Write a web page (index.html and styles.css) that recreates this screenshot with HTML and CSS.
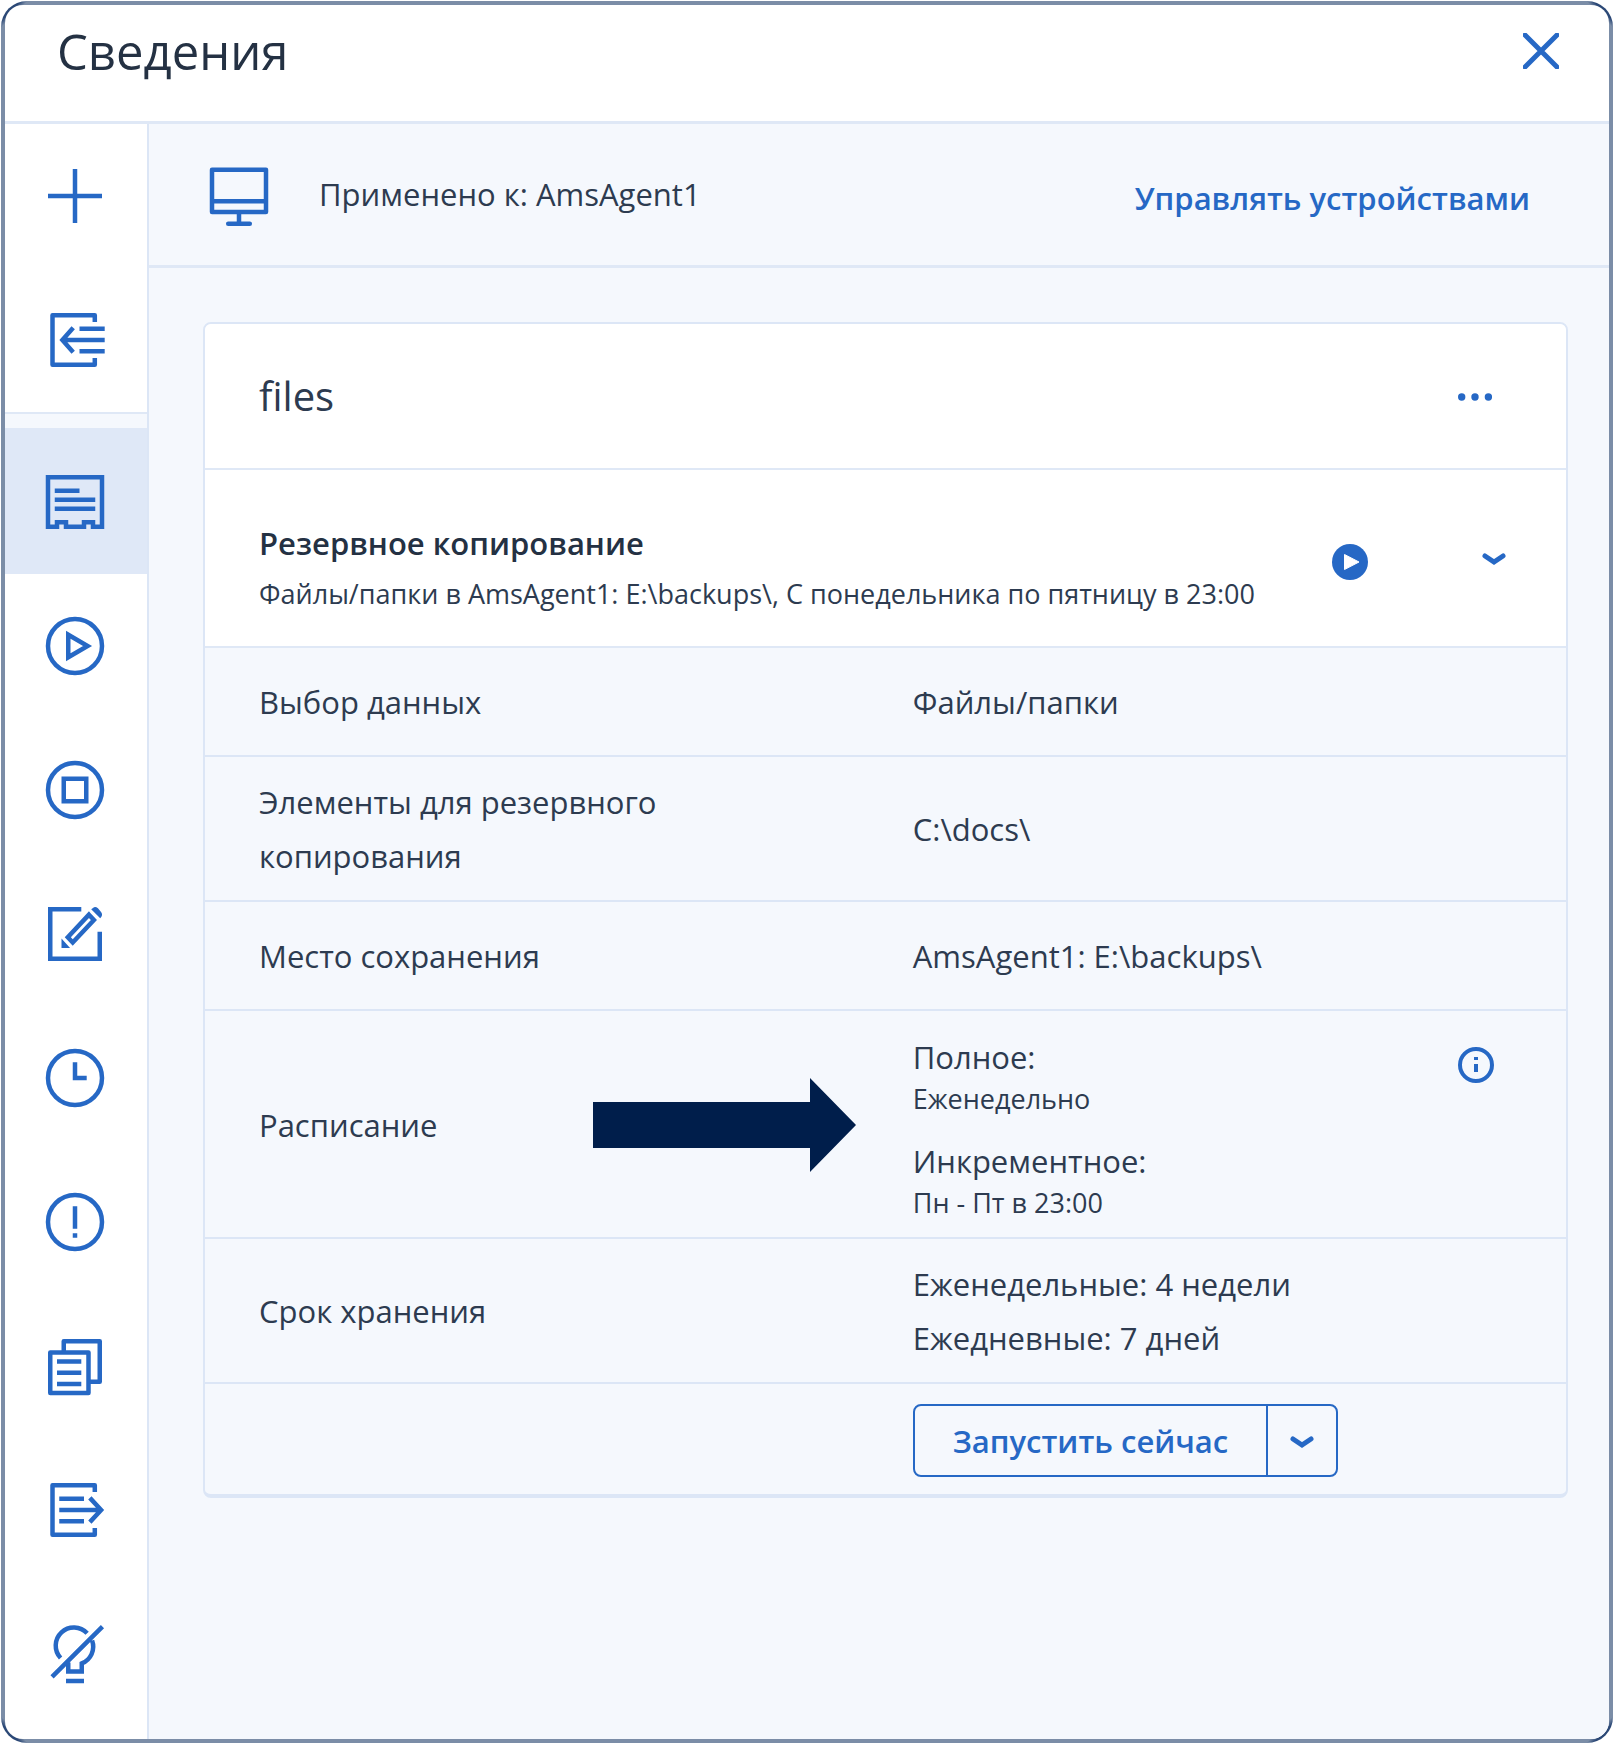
FILE: index.html
```html
<!DOCTYPE html>
<html lang="ru">
<head>
  <meta charset="UTF-8" />
  <meta name="viewport" content="width=device-width, initial-scale=1.0"/>
  <title>Сведения</title>
  <link rel="stylesheet" href="styles.css">
</head>
<body>
  <div class="frame">
    <div class="panel">
      <header class="panel-header">
        <h1>Сведения</h1>
        <button class="icon-button" aria-label="Закрыть">
          <svg class="icon-small" viewBox="0 0 36 36"><path class="thick" d="M2 2l32 32M34 2L2 34"/></svg>
        </button>
      </header>

      <div class="panel-body">
        <nav class="sidebar">
          <button class="side-item" aria-label="Создать">
            <svg class="icon" viewBox="0 0 16 16"><path d="M8 2v12M2 8h12"/></svg>
          </button>
          <button class="side-item" aria-label="Импорт">
            <svg class="icon" viewBox="0 0 16 16"><path stroke-linejoin="round" d="M12.4 4V2.5H3v11h9.4V12"/><path d="M14.6 5.5H9M14.6 8H5.4M14.6 10.5H9M7.6 5.3L5.2 8l2.4 2.7"/></svg>
          </button>
          <div class="side-gap"></div>
          <button class="side-item active" aria-label="Сведения">
            <svg class="icon" viewBox="0 0 16 16"><path d="M2 2.7h12v11h-2v-1h-2v1H6v-1H4v1H2zM3.5 5.7H9M3.5 7.7h9M3.5 9.7h9"/></svg>
          </button>
          <button class="side-item" aria-label="Запустить">
            <svg class="icon" viewBox="0 0 16 16"><circle cx="8" cy="8" r="6"/><path d="M6.5 5.5v5L10.8 8z"/></svg>
          </button>
          <button class="side-item" aria-label="Остановить">
            <svg class="icon" viewBox="0 0 16 16"><circle cx="8" cy="8" r="6"/><path d="M5.5 5.5h5v5h-5z"/></svg>
          </button>
          <button class="side-item" aria-label="Изменить">
            <svg class="icon" viewBox="0 0 16 16"><path d="M9.4 2.5H2.5v11h11v-6M11.1 3.7l1.1 1.2-4.7 5-1.1-1.2z"/><path class="solid" d="M5 9v2.1h1.9zM11.6 2.5l.4-.3q.5-.4 1.1.1l.6.7q.5.6.2 1.1l-.3.4z"/></svg>
          </button>
          <button class="side-item" aria-label="Действия">
            <svg class="icon" viewBox="0 0 16 16"><circle cx="8" cy="8" r="6"/><path d="M8 4.5V8h2.6"/></svg>
          </button>
          <button class="side-item" aria-label="Оповещения">
            <svg class="icon" viewBox="0 0 16 16"><circle cx="8" cy="8" r="6"/><path d="M8 4.5v5M8 10.5v1"/></svg>
          </button>
          <button class="side-item" aria-label="Клонировать">
            <svg class="icon" viewBox="0 0 16 16"><path stroke-linejoin="round" d="M2.5 5H11v9H2.5zM5.5 5V2.5h8v9H11"/><path d="M4 7h5.4M4 9.5h5.4M4 12h5.4"/></svg>
          </button>
          <button class="side-item" aria-label="Экспорт">
            <svg class="icon" viewBox="0 0 16 16"><path stroke-linejoin="round" d="M12.4 4V2.5H3v11h9.4V12"/><path d="M4.5 5.5H10M4.5 8h9M4.5 10.5H10M11.3 5.3L13.8 8l-2.5 2.7"/></svg>
          </button>
          <button class="side-item" aria-label="Отключить">
            <svg class="icon" viewBox="0 0 16 16"><path d="M2.9 13.1L14.1 1.9M10.7 3.4A4 4 0 0 0 4.8 8.9M11.8 5a4 4 0 0 1-2.3 5.1v1.8h-3V9.9M6 14h4"/></svg>
          </button>
        </nav>

        <main class="content">
          <div class="device-bar">
            <svg class="icon" viewBox="0 0 16 16"><path stroke-linecap="round" stroke-linejoin="round" d="M2 2.6h12v9.4H2zM2.2 9.6h11.6M8 12v2.6M5.6 14.6h4.8"/></svg>
            <span class="device-name">Применено к: AmsAgent1</span>
            <a class="manage-link" href="#">Управлять устройствами</a>
          </div>

          <section class="card">
            <div class="card-head">
              <h2>files</h2>
              <button class="icon-button" aria-label="Ещё">
                <svg class="icon-small" viewBox="0 0 36 36"><path class="solid" d="M0 19a3.7 3.7 0 1 1 7.4 0 3.7 3.7 0 0 1-7.4 0zM13.3 19a3.7 3.7 0 1 1 7.4 0 3.7 3.7 0 0 1-7.4 0zM26.7 19a3.7 3.7 0 1 1 7.4 0 3.7 3.7 0 0 1-7.4 0z"/></svg>
              </button>
            </div>

            <div class="plan">
              <div class="plan-text">
                <h3>Резервное копирование</h3>
                <p class="small">Файлы/папки в AmsAgent1: E:\backups\, С понедельника по пятницу в 23:00</p>
              </div>
              <div class="plan-buttons">
                <button class="icon-button run" aria-label="Запустить">
                  <svg class="icon-small" viewBox="0 0 36 36"><circle class="solid" cx="18" cy="18" r="18"/><path class="play" d="M12.5 10.5v15L27 18z"/></svg>
                </button>
                <button class="icon-button" aria-label="Свернуть">
                  <svg class="icon-small" viewBox="0 0 36 36"><path class="thick" d="M9 12l9 6 9-6"/></svg>
                </button>
              </div>
            </div>

            <table class="details">
              <tr>
                <th scope="row">Выбор данных</th>
                <td>Файлы/папки</td>
              </tr>
              <tr>
                <th scope="row">Элементы для резервного копирования</th>
                <td>C:\docs\</td>
              </tr>
              <tr>
                <th scope="row">Место сохранения</th>
                <td>AmsAgent1: E:\backups\</td>
              </tr>
              <tr>
                <th scope="row">
                  <div class="label-arrow">
                    Расписание
                    <svg class="arrow" viewBox="0 0 264 94"><path d="M0 24h217V0l46 47-46 47V70H0z"/></svg>
                  </div>
                </th>
                <td class="schedule-cell">
                  <div class="schedule">
                    <dl>
                      <dt>Полное:</dt>
                      <dd class="small">Еженедельно</dd>
                      <dt>Инкрементное:</dt>
                      <dd class="small">Пн - Пт в 23:00</dd>
                    </dl>
                    <button class="icon-button info" aria-label="Информация">
                      <svg class="icon-small" viewBox="0 0 36 36"><circle class="info-ring" cx="18" cy="18" r="16"/><path class="info-mark" d="M18 17v8M18 10v3"/></svg>
                    </button>
                  </div>
                </td>
              </tr>
              <tr>
                <th scope="row">Срок хранения</th>
                <td>Еженедельные: 4 недели<br>Ежедневные: 7 дней</td>
              </tr>
              <tr>
                <td></td>
                <td>
                  <div class="split-button">
                    <button class="run-now">Запустить сейчас</button>
                    <button class="run-more" aria-label="Другие варианты">
                      <svg class="icon-small" viewBox="0 0 36 36"><path class="thick" d="M9 16l9 6 9-6"/></svg>
                    </button>
                  </div>
                </td>
              </tr>
            </table>
          </section>
        </main>
      </div>
    </div>
  </div>
</body>
</html>
```
FILE: styles.css
```css
* {
  box-sizing: border-box;
  margin: 0;
  padding: 0;
}

body {
  padding: 1px;
  background: #fff;
  color: #2d3b50;
  font-family: "Open Sans", "Noto Sans", sans-serif;
  font-size: 31px;
  line-height: 44px;
}

button {
  font: inherit;
  border: none;
  background: none;
  cursor: pointer;
}

svg {
  display: block;
  flex: none;
}

/* window outline, thin and dark at the corners */
.frame {
  display: flex;
  min-height: calc(100vh - 2px);
  padding: 4px;
  border-radius: 26px;
  background:
    linear-gradient(135deg, #2b4876 14px, transparent 19px calc(100% - 19px), #2b4876 calc(100% - 14px)),
    linear-gradient(45deg, #2b4876 14px, transparent 19px calc(100% - 19px), #2b4876 calc(100% - 14px)),
    #7b8da7;
}

.panel {
  display: flex;
  flex-direction: column;
  flex: 1;
  border-radius: 18px;
  overflow: hidden;
  background: #fff;
}

.panel-header {
  display: flex;
  justify-content: space-between;
  align-items: center;
  padding: 12px 50px 36px 52px;
  border-bottom: 3px solid #dfe8f6;
}

.panel-header h1 {
  font-size: 49px;
  font-weight: 400;
  line-height: 68px;
  color: #243143;
}

.panel-body {
  display: flex;
  flex: 1;
}

/* icons */
.icon {
  width: 72px;
  height: 72px;
  fill: none;
  stroke: #2668c5;
  stroke-width: 1;
}

.icon-small {
  width: 36px;
  height: 36px;
  fill: none;
  stroke: #2668c5;
}

.thick {
  stroke-width: 5;
  stroke-linecap: round;
}

.solid {
  fill: #2668c5;
  stroke: none;
}

.play {
  fill: #fff;
  stroke: #fff;
  stroke-width: 1;
  stroke-linejoin: round;
}

.info-ring,
.info-mark {
  stroke-width: 4;
}

/* sidebar */
.sidebar {
  width: 144px;
  flex: none;
  border-right: 2px solid #dce6f6;
}

.side-item {
  display: flex;
  align-items: center;
  width: 100%;
  height: 144px;
  padding-left: 34px;
}

.side-item.active {
  height: 146px;
  background: #dfe8f7;
}

.side-gap {
  height: 16px;
  border-top: 2px solid #dfe8f6;
  background: #f5f8fd;
}

/* main area */
.content {
  flex: 1;
  min-width: 0;
  background: #f5f8fd;
}

.device-bar {
  display: flex;
  align-items: center;
  gap: 44px;
  height: 144px;
  padding: 0 79px 2px 54px;
  border-bottom: 3px solid #dfe8f6;
}

.manage-link {
  margin-left: auto;
  padding-top: 8px;
  color: #2668c5;
  font-weight: 600;
  text-decoration: none;
}

.card {
  margin: 54px 41px 54px 54px;
  border: 2px solid #dce6f6;
  border-bottom-width: 4px;
  border-radius: 8px;
  overflow: hidden;
}

.card-head {
  display: flex;
  justify-content: space-between;
  align-items: center;
  height: 146px;
  padding: 0 72px 0 54px;
  border-bottom: 2px solid #dfe8f6;
  background: #fff;
}

.card-head h2 {
  font-size: 40px;
  font-weight: 400;
}

.plan {
  display: flex;
  justify-content: space-between;
  align-items: flex-start;
  padding: 51px 54px 32px 54px;
  border-bottom: 2px solid #dfe8f6;
  background: #fff;
}

.plan h3 {
  margin-bottom: 9px;
  font-size: 31px;
  font-weight: 600;
  color: #243143;
}

.plan-buttons {
  display: flex;
  gap: 108px;
  padding-top: 23px;
}

.small {
  font-size: 27px;
  line-height: 40px;
}

/* plan details */
.details {
  width: 100%;
  table-layout: fixed;
  border-collapse: separate;
  border-spacing: 0;
}

.details th,
.details td {
  height: 109px;
  padding: 18px 56px 17px 54px;
  border-bottom: 2px solid #dce6f6;
  font-weight: 400;
  line-height: 54px;
  text-align: left;
  vertical-align: middle;
}

.details th,
.details td:first-child {
  width: 52%;
}

.details td:last-child {
  padding-left: 0;
}

.details tr:last-child td {
  padding-top: 20px;
  border-bottom: none;
}

.label-arrow {
  display: flex;
  justify-content: space-between;
  align-items: center;
}

.arrow {
  width: 264px;
  height: 94px;
  fill: #001e4b;
}

.details .schedule-cell {
  padding: 24px 72px 14px 0;
}

.schedule {
  display: flex;
  justify-content: space-between;
  align-items: flex-start;
}

.schedule dt {
  line-height: 44px;
}

.schedule dd {
  line-height: 40px;
}

.schedule dd + dt {
  margin-top: 20px;
}

.info {
  margin-top: 12px;
}

.split-button {
  display: inline-flex;
  height: 73px;
  vertical-align: top;
  border: 2px solid #2668c5;
  border-radius: 8px;
}

.run-now {
  padding: 0 38px;
  color: #2668c5;
  font-weight: 600;
}

.run-more {
  padding: 0 16px;
  border-left: 2px solid #2668c5;
}
```
